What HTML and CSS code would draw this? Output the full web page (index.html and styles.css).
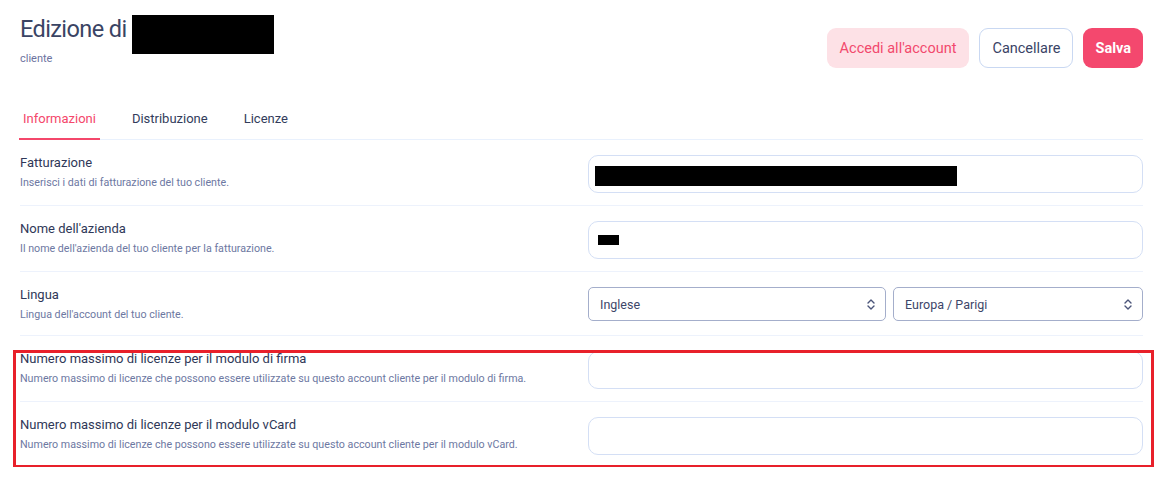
FILE: index.html
```html
<!DOCTYPE html>
<html lang="it">
<head>
<meta charset="utf-8">
<title>Edizione di cliente</title>
<link rel="stylesheet" href="styles.css">
</head>
<body>
<div class="page">
  <header class="header">
    <div class="title-block">
      <h1 class="title">Edizione di <span class="redact redact-title"></span></h1>
      <div class="subtitle">cliente</div>
    </div>
    <div class="actions">
      <button class="btn btn-soft">Accedi all'account</button>
      <button class="btn btn-outline">Cancellare</button>
      <button class="btn btn-primary">Salva</button>
    </div>
  </header>

  <nav class="tabs">
    <a class="tab active">Informazioni</a>
    <a class="tab">Distribuzione</a>
    <a class="tab">Licenze</a>
  </nav>

  <div class="row">
    <div class="meta">
      <div class="label">Fatturazione</div>
      <div class="desc">Inserisci i dati di fatturazione del tuo cliente.</div>
    </div>
    <div class="field">
      <div class="input"><span class="redact redact-long"></span></div>
    </div>
  </div>

  <div class="row">
    <div class="meta">
      <div class="label">Nome dell'azienda</div>
      <div class="desc">Il nome dell'azienda del tuo cliente per la fatturazione.</div>
    </div>
    <div class="field">
      <div class="input"><span class="redact redact-short"></span></div>
    </div>
  </div>

  <div class="row">
    <div class="meta">
      <div class="label">Lingua</div>
      <div class="desc">Lingua dell'account del tuo cliente.</div>
    </div>
    <div class="field selects">
      <div class="select select-a">
        <span>Inglese</span>
        <svg class="chev" width="8" height="13" viewBox="0 0 8 13"><path d="M1 5 L4 2 L7 5 M1 8 L4 11 L7 8" fill="none" stroke="#4b5579" stroke-width="1.4" stroke-linecap="round" stroke-linejoin="round"/></svg>
      </div>
      <div class="select select-b">
        <span>Europa / Parigi</span>
        <svg class="chev" width="8" height="13" viewBox="0 0 8 13"><path d="M1 5 L4 2 L7 5 M1 8 L4 11 L7 8" fill="none" stroke="#4b5579" stroke-width="1.4" stroke-linecap="round" stroke-linejoin="round"/></svg>
      </div>
    </div>
  </div>

  <div class="highlighted">
    <div class="row">
      <div class="meta">
        <div class="label">Numero massimo di licenze per il modulo di firma</div>
        <div class="desc">Numero massimo di licenze che possono essere utilizzate su questo account cliente per il modulo di firma.</div>
      </div>
      <div class="field">
        <div class="input"></div>
      </div>
    </div>
    <div class="row last">
      <div class="meta">
        <div class="label">Numero massimo di licenze per il modulo vCard</div>
        <div class="desc">Numero massimo di licenze che possono essere utilizzate su questo account cliente per il modulo vCard.</div>
      </div>
      <div class="field">
        <div class="input"></div>
      </div>
    </div>
    <div class="mark"></div>
  </div>
</div>
</body>
</html>
```

FILE: styles.css
```css
* { box-sizing: border-box; }

body {
  margin: 0;
  background: #ffffff;
  font-family: Roboto, "Liberation Sans", Arial, sans-serif;
  color: #3a4363;
}

.page {
  padding: 14px 24px 0 20px;
}

.header {
  display: flex;
  justify-content: space-between;
  align-items: flex-start;
}

.title {
  margin: 0;
  height: 30px;
  font-size: 23.5px;
  line-height: 30px;
  font-weight: 400;
  color: #3a4464;
  letter-spacing: -0.6px;
  display: flex;
  align-items: flex-start;
}

.redact {
  display: inline-block;
  background: #000;
}

.redact-title {
  width: 142px;
  height: 39px;
  margin-left: 5px;
  margin-top: 1px;
  flex: none;
}

.subtitle {
  margin-top: 7px;
  font-size: 11px;
  line-height: 16px;
  color: #6c73a0;
}

.actions {
  display: flex;
  gap: 10px;
  margin-top: 14px;
}

.btn {
  height: 40px;
  border-radius: 9px;
  font-family: inherit;
  font-size: 14.5px;
  padding: 0 12px;
  border: 1px solid transparent;
  cursor: pointer;
}

.btn-soft {
  background: #fde1e6;
  color: #f2496d;
}

.btn-outline {
  background: #fff;
  border-color: #c9d8f2;
  color: #3a4466;
}

.btn-primary {
  background: #f4486e;
  color: #fff;
  font-weight: 700;
  padding: 0 11px;
}

.tabs {
  display: flex;
  margin-top: 32px;
  border-bottom: 1px solid #e9f1fd;
  margin-left: -1px;
}

.tab {
  padding: 10px 4px 10px;
  font-size: 13px;
  line-height: 18px;
  font-weight: 400;
  color: #323c5b;
  border-bottom: 2px solid transparent;
  margin-bottom: -1px;
  margin-right: 28px;
}

.tab.active {
  color: #f4476b;
  border-bottom-color: #f4476b;
}

.row {
  display: grid;
  grid-template-columns: 1fr 555px;
  column-gap: 14px;
  padding: 15px 0 12px;
  border-bottom: 1px solid #edf2fc;
}

.row.last {
  border-bottom: none;
}

.meta {
  display: flex;
  flex-direction: column;
}

.label {
  margin-top: -2px;
  font-size: 13px;
  line-height: 20px;
  font-weight: 400;
  color: #2f3858;
}

.desc {
  margin-top: 2px;
  font-size: 10.7px;
  line-height: 16px;
  color: #6d78a2;
}

.input {
  height: 38px;
  border: 1px solid #d4dff5;
  border-radius: 10px;
  display: flex;
  align-items: center;
  padding: 0 6px;
}

.redact-long {
  width: 362px;
  height: 20px;
  margin-top: 4px;
}

.redact-short {
  width: 21px;
  height: 10px;
  margin-left: 3px;
}

.selects {
  display: flex;
  gap: 7px;
}

.select {
  height: 34px;
  border: 1px solid #a4aecb;
  border-radius: 5px;
  display: flex;
  align-items: center;
  justify-content: space-between;
  padding: 0 10px 0 11px;
  font-size: 12.5px;
  color: #3d4669;
}

.select-a { width: 298px; }
.select-b { flex: 1; }

.chev { display: block; }

.highlighted {
  position: relative;
}

.mark {
  position: absolute;
  top: 14px;
  left: -7px;
  right: -11px;
  bottom: -1px;
  border: 3px solid #e8202a;
  pointer-events: none;
}
```
